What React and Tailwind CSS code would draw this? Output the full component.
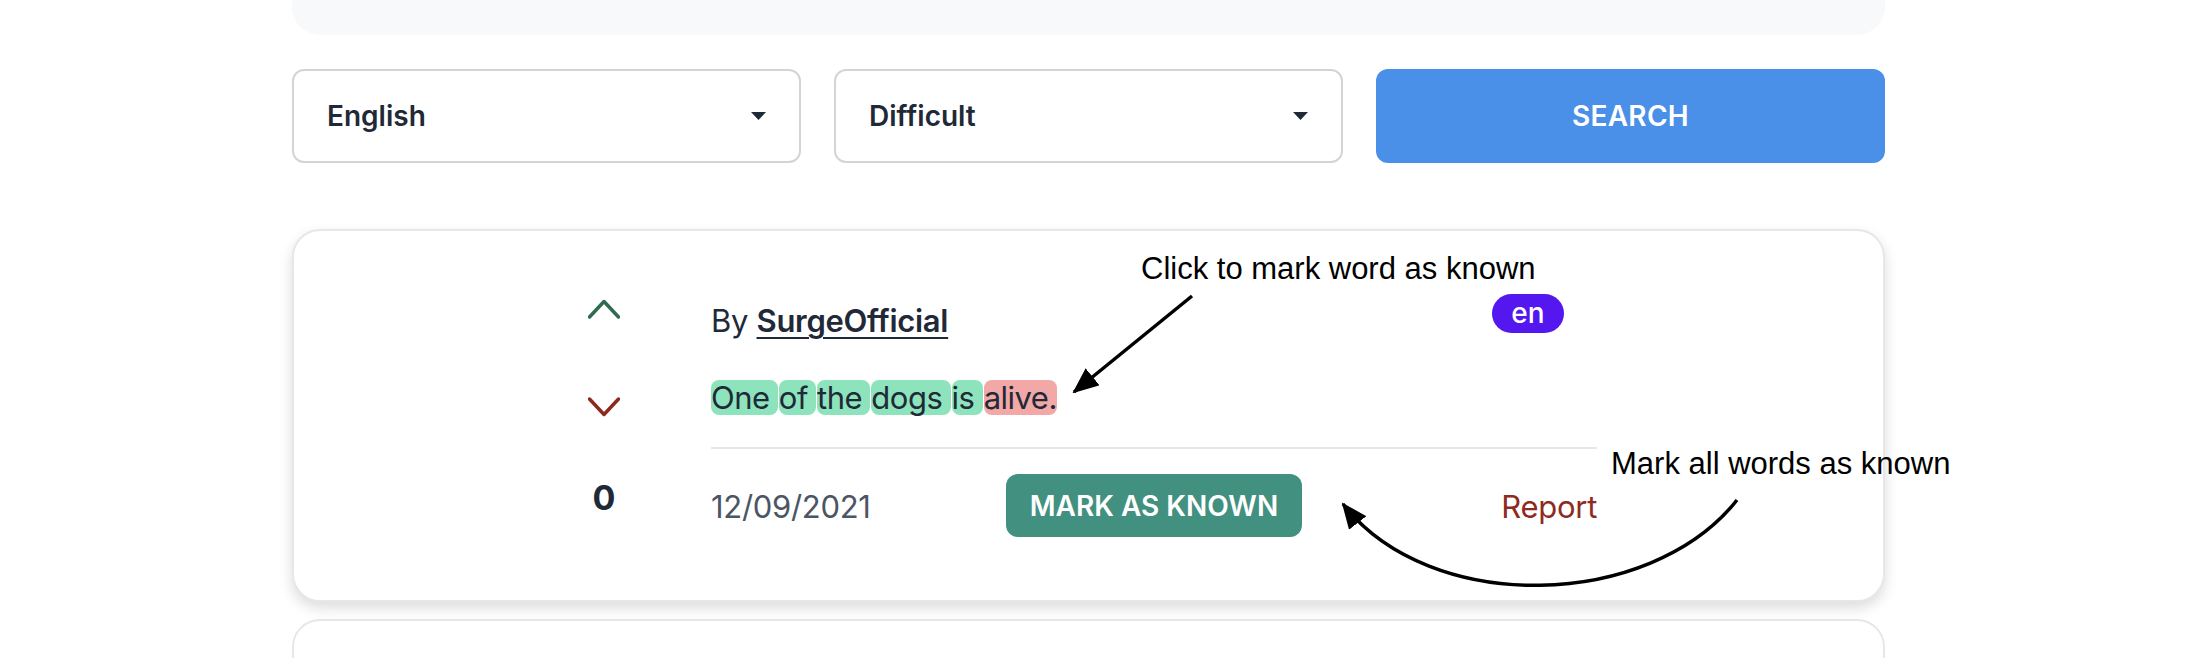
const Select = ({ label }) => (
  <div className="flex items-center justify-between h-[94px] rounded-[12px] border-2 border-[#d4d4d8] bg-white pl-[33px] pr-[33px]">
    <span className="text-[28px] font-semibold text-[#1f2937]">{label}</span>
    <svg width="15" height="8" viewBox="0 0 15 8">
      <path d="M0 0 L15 0 L7.5 8 Z" fill="#1f2937" />
    </svg>
  </div>
);

const Word = ({ text, known }) => (
  <span
    className={`inline-block h-[35px] leading-[35px] rounded-[8px] ${
      known ? 'bg-[#8de4bc] mr-[1px]' : 'bg-[#f1a8a6]'
    }`}
  >
    {text}
  </span>
);

export default function App() {
  const words = [
    { text: 'One\u00a0', known: true },
    { text: 'of\u00a0', known: true },
    { text: 'the\u00a0', known: true },
    { text: 'dogs\u00a0', known: true },
    { text: 'is\u00a0', known: true },
    { text: 'alive.', known: false },
  ];

  return (
    <div className="relative w-[2202px] h-[658px] overflow-hidden bg-white font-['Inter',sans-serif]">
      <div className="ml-[292px] w-[1593px]">
        <div className="h-[35px] rounded-b-[28px] bg-[#f8f9fa]" />

        <div className="mt-[34px] grid grid-cols-3 gap-x-[33px]">
          <Select label="English" />
          <Select label="Difficult" />
          <button className="h-[94px] rounded-[12px] bg-[#4a90e8] text-white text-[28px] font-semibold tracking-[0.3px]">
            SEARCH
          </button>
        </div>

        {/* sentence card */}
        <div className="mt-[66px] h-[373px] rounded-[28px] border-2 border-[#e5e7eb] bg-white shadow-[0_6px_14px_rgba(0,0,0,0.14)] flex items-start pl-[246px]">
          <div className="w-[128px] pt-[62px] flex flex-col items-center">
            <svg width="32" height="32" viewBox="0 0 32 32">
              <path d="M1.5 24 L16 8.5 L30.5 24" fill="none" stroke="#2f6b4f" strokeWidth="3.5" strokeLinecap="round" strokeLinejoin="round" />
            </svg>
            <svg className="mt-[66px]" width="32" height="32" viewBox="0 0 32 32">
              <path d="M1.5 8 L16 23.5 L30.5 8" fill="none" stroke="#8c2a20" strokeWidth="3.5" strokeLinecap="round" strokeLinejoin="round" />
            </svg>
            <span className="mt-[58px] text-[34px] leading-[34px] font-bold text-[#1f2937]">0</span>
          </div>

          <div className="ml-[43px] w-[886px] pt-[66px] text-[31px] tracking-[-0.3px] text-[#1f2937]">
            <div className="h-[48px] flex items-center justify-between">
              <span className="leading-[48px]">
                By <span className="font-semibold underline underline-offset-[5px] decoration-2">SurgeOfficial</span>
              </span>
              <span className="mb-[16px] mr-[33px] h-[39px] w-[72px] rounded-full bg-[#5417ef] text-white text-[28px] font-medium tracking-normal flex items-center justify-center">
                en
              </span>
            </div>

            <div className="mt-[35px] h-[35px] flex tracking-[-0.5px]">
              {words.map((w, i) => (
                <Word key={i} text={w.text} known={w.known} />
              ))}
            </div>

            <div className="mt-[32px] h-[2px] bg-[#e5e7eb]" />

            <div className="mt-[25px] grid grid-cols-3 items-center">
              <span className="text-[#4b5563] pt-[3px]">12/09/2021</span>
              <button className="h-[63px] rounded-[12px] bg-[#42907f] text-white text-[28px] font-semibold tracking-normal">
                MARK AS KNOWN
              </button>
              <span className="text-right text-[#8f2a20] pt-[3px]">Report</span>
            </div>
          </div>
        </div>

        <div className="mt-[17px] h-[120px] rounded-[28px] border-2 border-[#e5e7eb] bg-white" />
      </div>

      {/* annotations */}
      <svg className="absolute left-0 top-0 pointer-events-none" width="2202" height="658">
        <defs>
          <marker id="head" markerUnits="userSpaceOnUse" markerWidth="26" markerHeight="22" refX="24" refY="11" orient="auto">
            <path d="M0 0 L26 11 L0 22 Z" fill="#000" />
          </marker>
        </defs>
        <line x1="1192" y1="296" x2="1074" y2="392" stroke="#000" strokeWidth="3.5" markerEnd="url(#head)" />
        <path d="M1737 500 C1650 610 1430 616 1343 504" fill="none" stroke="#000" strokeWidth="3.5" markerEnd="url(#head)" />
      </svg>
      <div className="absolute left-[1141px] top-[253px] text-[31px] leading-[31px] text-black font-['Liberation_Sans',Arial,sans-serif] whitespace-nowrap">
        Click to mark word as known
      </div>
      <div className="absolute left-[1611px] top-[448px] text-[31px] leading-[31px] text-black font-['Liberation_Sans',Arial,sans-serif] whitespace-nowrap">
        Mark all words as known
      </div>
    </div>
  );
}
